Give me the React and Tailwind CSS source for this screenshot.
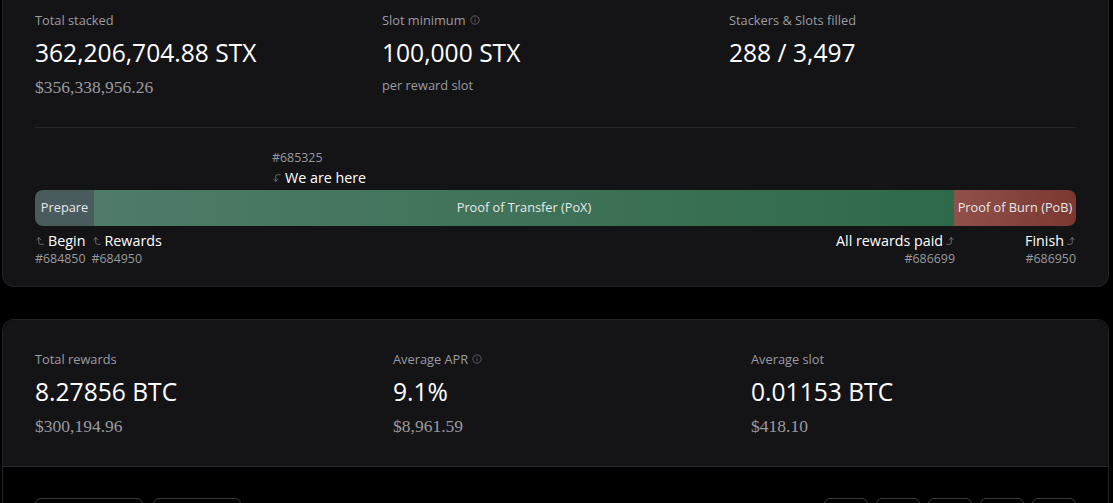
import { CornerLeftDown, CornerLeftUp, CornerRightUp } from 'lucide-react'

const FONT = { fontFamily: '"Open Sans", "Noto Sans", sans-serif' }

function InfoDot() {
  return (
    <svg width="10" height="10" viewBox="0 0 10 10" className="ml-1 inline-block shrink-0">
      <circle cx="5" cy="5" r="4.2" fill="none" stroke="#5b5b60" strokeWidth="1" />
      <path d="M5 4.4v2.8" stroke="#5b5b60" strokeWidth="1" />
      <circle cx="5" cy="3" r="0.6" fill="#5b5b60" />
    </svg>
  )
}

function Stat({ label, value, sub, info, serifSub = true }) {
  return (
    <div>
      <p className="flex items-center text-[12.8px] leading-4 text-[#9b9ba0]">
        {label}
        {info ? <InfoDot /> : null}
      </p>
      <p className="mt-[9px] text-[24.6px] leading-8 text-white">{value}</p>
      {sub ? (
        <p
          className={
            serifSub
              ? 'mt-[8px] font-["Liberation_Serif"] text-[17.5px] leading-5 text-[#9a9a9e]'
              : 'mt-[6px] text-[12.8px] leading-5 text-[#9b9ba0]'
          }
        >
          {sub}
        </p>
      ) : null}
    </div>
  )
}

function Marker({ label, block, icon, right }) {
  return (
    <div className={right ? 'flex flex-col items-end' : 'flex flex-col items-start'}>
      <p className="flex items-center text-[14.3px] leading-5 text-white">
        {!right ? icon : null}
        <span>{label}</span>
        {right ? icon : null}
      </p>
      <p className="text-[12.4px] leading-4 text-[#9a9a9e]">{block}</p>
    </div>
  )
}

export default function App() {
  const upLeft = <CornerLeftUp size={10} strokeWidth={1.5} className="mr-[3px] text-[#9a9a9e]" />
  const upRight = <CornerRightUp size={10} strokeWidth={1.5} className="ml-[2px] text-[#9a9a9e]" />

  return (
    <div className="min-h-[503px] bg-black" style={FONT}>
      <div className="ml-[2px] w-[1107px] rounded-b-xl border border-t-0 border-[#232326] bg-[#141417] px-[32px] pt-[12px] pb-[19px]">
        <div className="grid grid-cols-3">
          <Stat label="Total stacked" value="362,206,704.88 STX" sub="$356,338,956.26" />
          <Stat label="Slot minimum" info value="100,000 STX" sub="per reward slot" serifSub={false} />
          <Stat label="Stackers & Slots filled" value="288 / 3,497" />
        </div>

        <div className="mt-[30px] border-t border-[#26262a]" />

        <div className="mt-[22px] pl-[237px]">
          <p className="text-[12.4px] leading-4 text-[#9a9a9e]">#685325</p>
          <p className="mt-[2px] flex items-center text-[14.3px] leading-5 text-white">
            <CornerLeftDown size={10} strokeWidth={1.5} className="mr-[3px] text-[#9a9a9e]" />
            We are here
          </p>
        </div>

        <div className="mt-[2px] flex h-[36px] overflow-hidden rounded-lg text-[12.75px] text-[#e8e8ea]">
          <div className="flex w-[59px] items-center justify-center bg-[#4a5b5d]">Prepare</div>
          <div className="flex flex-1 items-center justify-center bg-gradient-to-r from-[#4f7b68] to-[#2e6a4a]">
            Proof of Transfer (PoX)
          </div>
          <div className="flex w-[122px] items-center justify-center bg-gradient-to-r from-[#91504a] to-[#7a3831]">
            Proof of Burn (PoB)
          </div>
        </div>

        <div className="mt-[5px] flex items-start">
          <Marker label="Begin" block="#684850" icon={upLeft} />
          <div className="ml-[6px]">
            <Marker label="Rewards" block="#684950" icon={upLeft} />
          </div>
          <div className="ml-auto">
            <Marker label="All rewards paid" block="#686699" icon={upRight} right />
          </div>
          <div className="ml-[70px]">
            <Marker label="Finish" block="#686950" icon={upRight} right />
          </div>
        </div>
      </div>

      <div className="mt-[32px] ml-[2px] w-[1107px] rounded-t-xl border border-b-0 border-[#232326]">
        <div className="rounded-t-xl bg-[#141417] pt-[31px] pb-[30px] pl-[32px]">
          <div className="grid grid-cols-[358px_358px_358px]">
            <Stat label="Total rewards" value="8.27856 BTC" sub="$300,194.96" />
            <Stat label="Average APR" info value="9.1%" sub="$8,961.59" />
            <Stat label="Average slot" value="0.01153 BTC" sub="$418.10" />
          </div>
        </div>
        <div className="flex h-[40px] items-start border-t border-[#2a2a2e] bg-black px-[32px] pt-[31px]">
          <div className="h-[20px] w-[108px] rounded-md border border-[#3a3a3e]" />
          <div className="ml-[10px] h-[20px] w-[88px] rounded-md border border-[#3a3a3e]" />
          <div className="ml-auto flex gap-[8px]">
            <div className="h-[20px] w-[44px] rounded-md border border-[#3a3a3e]" />
            <div className="h-[20px] w-[44px] rounded-md border border-[#3a3a3e]" />
            <div className="h-[20px] w-[44px] rounded-md border border-[#3a3a3e]" />
            <div className="h-[20px] w-[44px] rounded-md border border-[#3a3a3e]" />
            <div className="h-[20px] w-[44px] rounded-md border border-[#3a3a3e]" />
          </div>
        </div>
      </div>
    </div>
  )
}
